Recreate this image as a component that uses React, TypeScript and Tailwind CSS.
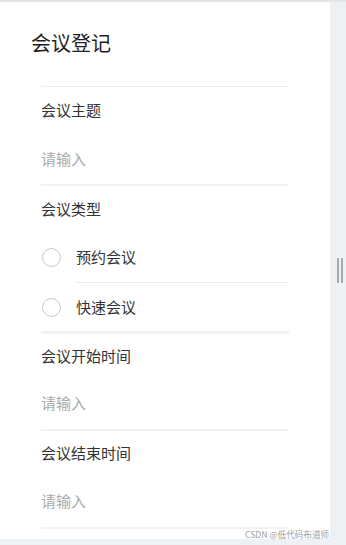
import React from "react";

const font = { fontFamily: '"Noto Sans CJK SC", "Noto Sans", sans-serif' };

function Divider({ className = "" }: { className?: string }) {
  return <div className={`h-px bg-[#ededed] ${className}`} />;
}

function Radio({ label }: { label: string }) {
  return (
    <label className="flex items-center h-full cursor-pointer">
      <span className="w-[19px] h-[19px] rounded-full border border-[#c9c9c9] bg-white ml-px" />
      <span className="ml-[15px] text-[15px] text-[#333]">{label}</span>
    </label>
  );
}

function InputRow({ h }: { h: string }) {
  return (
    <div className={`flex items-center ${h}`}>
      <input
        placeholder="请输入"
        className="w-full outline-none bg-transparent text-[15px] text-[#333] placeholder:text-[#aaaaaa]"
        style={font}
      />
    </div>
  );
}

export default function App() {
  return (
    <div
      className="relative w-[346px] h-[545px] overflow-hidden bg-[#eef1f3] border-t-2 border-[#e3e5e7]"
      style={font}
    >
      <div className="flex">
        <div className="w-[330px] h-[537px] bg-white">
          <h1 className="mt-[27px] ml-[31px] text-[20px] leading-[28px] text-[#1f1f1f] font-normal">
            会议登记
          </h1>
          <div className="mx-[41px] mt-[29px]">
            <Divider />
            <div className="h-[47px] flex items-center text-[15px] text-[#333]">会议主题</div>
            <InputRow h="h-[50px]" />
            <div className="h-[2px] bg-[#f2f2f2]" />
            <div className="h-[46px] flex items-center text-[15px] text-[#333]">会议类型</div>
            <div className="h-[50px]">
              <Radio label="预约会议" />
            </div>
            <Divider className="ml-[35px]" />
            <div className="h-[48px]">
              <Radio label="快速会议" />
            </div>
            <div className="h-[3px] bg-[#f3f3f3]" />
            <div className="h-[44px] flex items-center text-[15px] text-[#333]">会议开始时间</div>
            <InputRow h="h-[51px]" />
            <div className="h-[2px] bg-[#f2f2f2]" />
            <div className="h-[45px] flex items-center text-[15px] text-[#333]">会议结束时间</div>
            <InputRow h="h-[51px]" />
            <div className="h-[2px] bg-[#f2f2f2]" />
          </div>
        </div>
        <div className="w-[16px] pt-[256px] pl-[7px] flex gap-[2px]">
          <div className="w-[2px] h-[25px] bg-[#a9a9a9]" />
          <div className="w-[2px] h-[25px] bg-[#a9a9a9]" />
        </div>
      </div>
      <div className="absolute left-[245px] top-[526px] text-[8.6px] leading-[12px] text-[#a0a0a0] whitespace-nowrap">
        CSDN @低代码布道师
      </div>
    </div>
  );
}
